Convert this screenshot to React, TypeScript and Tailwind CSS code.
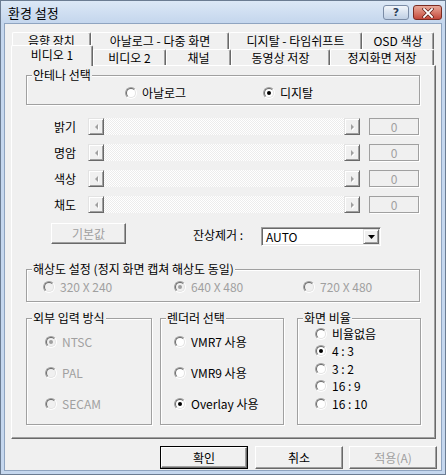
import React from "react";

function Radio({ checked = false, disabled = false }: { checked?: boolean; disabled?: boolean }) {
  return (
    <span className="flex h-[12px] w-[12px] shrink-0 items-center justify-center rounded-full border border-t-[#a0a0a0] border-l-[#a0a0a0] border-r-white border-b-white">
      <span
        className={`flex h-[10px] w-[10px] items-center justify-center rounded-full border border-t-[#696969] border-l-[#696969] border-r-[#e3e3e3] border-b-[#e3e3e3] ${
          disabled ? "bg-[#f0f0f0]" : "bg-white"
        }`}
      >
        {checked && <span className={`h-[4px] w-[4px] rounded-full ${disabled ? "bg-[#a0a0a0]" : "bg-black"}`} />}
      </span>
    </span>
  );
}

function Option({
  label,
  checked,
  disabled,
  className = "",
}: {
  label: string;
  checked?: boolean;
  disabled?: boolean;
  className?: string;
}) {
  return (
    <div className={`flex h-[14px] items-center gap-[5px] ${className}`}>
      <Radio checked={checked} disabled={disabled} />
      <span className={`leading-[14px] ${disabled ? "text-[#a0a0a0]" : "text-black"}`}>{label}</span>
    </div>
  );
}

function Group({ label, className = "", children }: { label: string; className?: string; children?: React.ReactNode }) {
  return (
    <div className={`flex flex-col border border-[#a0a0a0] shadow-[1px_1px_0_#fff,inset_1px_1px_0_#fff] ${className}`}>
      <div className="-mt-[8px] ml-[5px] h-[14px] w-fit bg-[#f0f0f0] px-[1px] leading-[14px]">{label}</div>
      {children}
    </div>
  );
}

function Arrow({ dir }: { dir: "left" | "right" }) {
  return (
    <svg width="5" height="8" viewBox="0 0 5 8">
      {dir === "left" ? (
        <>
          <path d="M4 1 L1 4 L4 7 Z" fill="#ffffff" transform="translate(1 1)" />
          <path d="M4 1 L1 4 L4 7 Z" fill="#a0a0a0" />
        </>
      ) : (
        <>
          <path d="M1 1 L4 4 L1 7 Z" fill="#ffffff" transform="translate(1 1)" />
          <path d="M1 1 L4 4 L1 7 Z" fill="#a0a0a0" />
        </>
      )}
    </svg>
  );
}

function ScrollBtn({ dir }: { dir: "left" | "right" }) {
  return (
    <div className="flex h-[17px] w-[16px] shrink-0 items-center justify-center border border-t-[#e3e3e3] border-l-[#e3e3e3] border-r-[#696969] border-b-[#696969] bg-[#f0f0f0] shadow-[inset_1px_1px_0_#fff,inset_-1px_-1px_0_#a0a0a0]">
      <Arrow dir={dir} />
    </div>
  );
}

function SliderRow({ label }: { label: string }) {
  return (
    <div className="flex h-[17px] items-center">
      <span className="w-[50px] text-right leading-[14px]">{label}</span>
      <div className="ml-[12px] flex">
        <ScrollBtn dir="left" />
        <div className="h-[17px] w-[240px] bg-[repeating-conic-gradient(#ffffff_0%_25%,#ececec_0%_50%)] bg-[length:2px_2px]" />
        <ScrollBtn dir="right" />
      </div>
      <div className="ml-[9px] flex h-[17px] w-[50px] items-center justify-center border border-[#a0a0a0] text-[#a0a0a0] shadow-[1px_1px_0_#fff]">
        0
      </div>
    </div>
  );
}

function Tab({ label, w, h, selected = false }: { label: string; w: string; h: string; selected?: boolean }) {
  return (
    <div
      className={`flex shrink-0 justify-center rounded-t-[2px] border-t border-l border-r border-t-white border-l-white border-r-[#696969] bg-[#f0f0f0] leading-[14px] shadow-[inset_-1px_0_0_#a0a0a0] ${w} ${h} ${
        selected ? "relative z-10 -mb-px items-start pt-[2px]" : "items-center"
      }`}
    >
      {label}
    </div>
  );
}

function PushButton({ label, isDefault = false, disabled = false }: { label: string; isDefault?: boolean; disabled?: boolean }) {
  const inner = (
    <div
      className={`flex h-full w-full items-center justify-center border border-t-white border-l-white border-r-[#696969] border-b-[#696969] shadow-[inset_-1px_-1px_0_#a0a0a0] ${
        disabled ? "text-[#a0a0a0]" : "text-black"
      }`}
    >
      {label}
    </div>
  );
  return isDefault ? (
    <div className="h-[23px] w-[88px] border border-black">{inner}</div>
  ) : (
    <div className="h-[23px] w-[88px]">{inner}</div>
  );
}

export default function App() {
  return (
    <div className="flex h-[475px] w-[446px] flex-col border border-[#6b7c92] bg-[#c5d7ee] font-['Noto_Sans_CJK_KR','Liberation_Sans',sans-serif] text-[12px] text-black">
      {/* title bar */}
      <div className="flex h-[22px] items-start justify-between bg-gradient-to-b from-[#dce8f6] to-[#c4d6ed] pl-[7px] pr-[3px]">
        <span className="mt-[4px] text-[13px] leading-[16px]">환경 설정</span>
        <div className="mt-[4px] flex gap-[4px]">
          <div className="flex h-[15px] w-[26px] items-center justify-center rounded-[3px] border border-[#7b8ca6] bg-gradient-to-b from-[#f2f6fb] to-[#bfcfe4]">
            <span className="font-['DejaVu_Sans',sans-serif] text-[11px] font-bold leading-none text-[#2c3e5a] [text-shadow:0_0_1px_#fff]">?</span>
          </div>
          <div className="flex h-[15px] w-[29px] items-center justify-center rounded-[3px] border border-[#7a2b22] bg-gradient-to-b from-[#e8a899] to-[#c3463a]">
            <svg width="12" height="10" viewBox="0 0 12 10">
              <path d="M2 1 L10 9 M10 1 L2 9" stroke="#5a1a14" strokeWidth="3.2" strokeLinecap="square" />
              <path d="M2 1 L10 9 M10 1 L2 9" stroke="#ffffff" strokeWidth="1.8" strokeLinecap="square" />
            </svg>
          </div>
        </div>
      </div>

      {/* client */}
      <div className="mx-[3px] mb-[3px] flex flex-1 flex-col border border-[#8fa4c0] bg-[#f0f0f0] pl-[6px] pt-[8px]">
        {/* tabs */}
        <div className="flex h-[17px] pl-px">
          <Tab label="음향 장치" w="w-[79px]" h="h-[17px]" />
          <Tab label="아날로그 - 다중 화면" w="w-[138px]" h="h-[17px]" />
          <Tab label="디지탈 - 타임쉬프트" w="w-[133px]" h="h-[17px]" />
          <Tab label="OSD 색상" w="w-[72px]" h="h-[17px]" />
        </div>
        <div className="-mt-[4px] flex h-[20px] items-end">
          <Tab label="비디오 1" w="w-[82px]" h="h-[21px]" selected />
          <Tab label="비디오 2" w="w-[73px]" h="h-[16px]" />
          <Tab label="채널" w="w-[65px]" h="h-[16px]" />
          <Tab label="동영상 저장" w="w-[99px]" h="h-[16px]" />
          <Tab label="정지화면 저장" w="w-[104px]" h="h-[16px]" />
        </div>

        {/* panel */}
        <div className="flex h-[374px] w-[425px] flex-col border border-t-white border-l-white border-r-[#696969] border-b-[#696969] px-[14px] pt-[9px] shadow-[inset_-1px_-1px_0_#a0a0a0]">
          <Group label="안테나 선택" className="h-[30px] w-[394px]">
            <div className="mt-[4px] flex">
              <Option label="아날로그" className="ml-[98px] w-[138px]" />
              <Option label="디지탈" checked />
            </div>
          </Group>

          <div className="mt-[13px] flex flex-col gap-[9px]">
            <SliderRow label="밝기" />
            <SliderRow label="명암" />
            <SliderRow label="색상" />
            <SliderRow label="채도" />
          </div>

          <div className="mt-[10px] flex items-start">
            <div className="ml-[25px] h-[21px] w-[75px]">
              <div className="flex h-full w-full items-center justify-center border border-t-white border-l-white border-r-[#696969] border-b-[#696969] text-[#a0a0a0] shadow-[inset_-1px_-1px_0_#a0a0a0]">
                기본값
              </div>
            </div>
            <span className="ml-[67px] mt-[5px] w-[68px] leading-[14px]">잔상제거 :</span>
            <div className="mt-[4px] flex h-[19px] w-[120px] items-center justify-between border border-t-[#a0a0a0] border-l-[#a0a0a0] border-r-white border-b-white bg-white pl-[4px] pr-px shadow-[inset_1px_1px_0_#696969,inset_-1px_-1px_0_#e3e3e3]">
              <span className="leading-[14px]">AUTO</span>
              <div className="flex h-[15px] w-[16px] items-center justify-center border border-t-[#e3e3e3] border-l-[#e3e3e3] border-r-[#696969] border-b-[#696969] bg-[#f0f0f0] shadow-[inset_1px_1px_0_#fff,inset_-1px_-1px_0_#a0a0a0]">
                <svg width="7" height="4" viewBox="0 0 7 4">
                  <path d="M0 0 H7 L3.5 4 Z" fill="#000" />
                </svg>
              </div>
            </div>
          </div>

          <Group label="해상도 설정 (정지 화면 캡쳐 해상도 동일)" className="mt-[23px] h-[33px] w-[394px]">
            <div className="mt-[4px] flex">
              <Option label="320 X 240" disabled className="ml-[16px] w-[131px]" />
              <Option label="640 X 480" disabled checked className="w-[129px]" />
              <Option label="720 X 480" disabled />
            </div>
          </Group>

          <div className="mt-[16px] flex">
            <Group label="외부 입력 방식" className="h-[107px] w-[126px]">
              <div className="ml-[18px] mt-[10px] flex flex-col gap-[17px]">
                <Option label="NTSC" disabled checked />
                <Option label="PAL" disabled />
                <Option label="SECAM" disabled />
              </div>
            </Group>
            <Group label="렌더러 선택" className="ml-[8px] h-[107px] w-[124px]">
              <div className="ml-[13px] mt-[10px] flex flex-col gap-[17px]">
                <Option label="VMR7 사용" />
                <Option label="VMR9 사용" />
                <Option label="Overlay 사용" checked />
              </div>
            </Group>
            <Group label="화면 비율" className="ml-[13px] h-[107px] w-[124px]">
              <div className="ml-[17px] flex flex-col">
                {[
                  { l: "비율없음", c: false },
                  { l: "4 : 3", c: true },
                  { l: "3 : 2", c: false },
                  { l: "16 : 9", c: false },
                  { l: "16 : 10", c: false },
                ].map((o) => (
                  <div key={o.l} className="flex h-[17.5px] items-center">
                    <Option label={o.l} checked={o.c} />
                  </div>
                ))}
              </div>
            </Group>
          </div>
        </div>

        {/* bottom buttons */}
        <div className="mt-[7px] flex pl-[149px]">
          <PushButton label="확인" isDefault />
          <div className="ml-[7px]">
            <PushButton label="취소" />
          </div>
          <div className="ml-[6px]">
            <PushButton label="적용(A)" disabled />
          </div>
        </div>
      </div>
    </div>
  );
}
